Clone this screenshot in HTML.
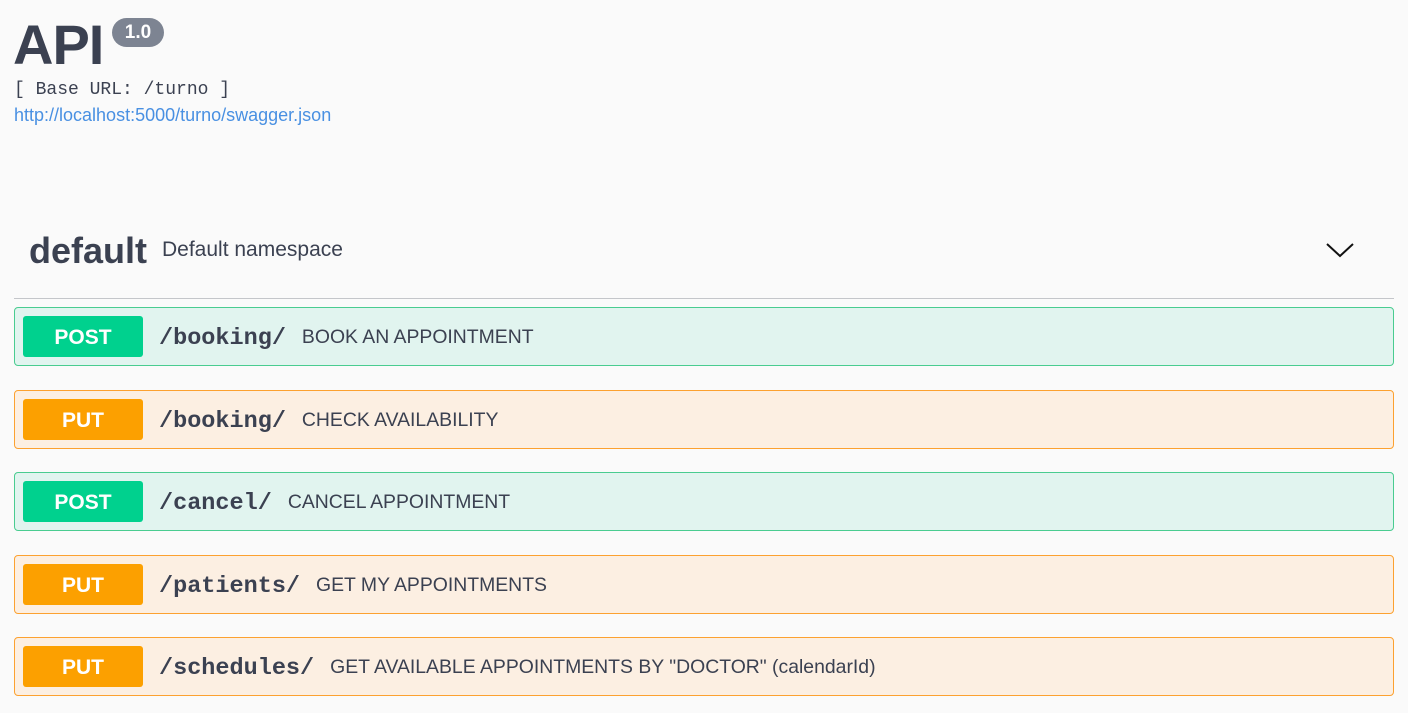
<!DOCTYPE html>
<html><head><style>
body{margin:0;background:#fafafa;font-family:"Liberation Sans",sans-serif;color:#3b4151;width:1408px;height:713px;overflow:hidden;position:relative}
.abs{position:absolute}
.title{left:13px;top:14px;font-size:56px;font-weight:bold;line-height:62px;color:#3b4151;letter-spacing:-1px}
.ver{left:112px;top:18px;width:52px;height:29px;border-radius:15px;background:#7d8492;color:#fff;font-weight:bold;font-size:19px;line-height:30px;text-align:center}
.base{left:14px;top:80px;font-family:"Liberation Mono",monospace;font-size:18px;color:#3b4151}
.link{left:14px;top:105px;font-size:18px;color:#4990e2}
.def{left:29px;top:229px;font-size:36px;font-weight:bold;line-height:44px}
.ns{left:162px;top:238px;font-size:21px;line-height:24px}
.sep{left:14px;top:298px;width:1380px;height:1px;background:#c4c6ca}
.op{position:absolute;left:14px;width:1378px;height:57px;border-radius:4px;border:1px solid}
.post{background:#e1f4ef;border-color:#49cc90}
.put{background:#fcefe2;border-color:#fca130}
.m{position:absolute;left:8px;top:8px;width:120px;height:41px;border-radius:3px;color:#fff;font-weight:bold;font-size:21px;line-height:43px;text-align:center}
.post .m{background:#00d18e}.put .m{background:#fca000}
.p{position:absolute;left:144px;top:2px;line-height:57px;font-family:"Liberation Mono",monospace;font-weight:bold;font-size:23.5px;color:#3b4151}
.d{font-family:"Liberation Sans",sans-serif;font-weight:normal;font-size:19.4px;margin-left:16px;position:relative;top:-1px}
</style></head><body>
<div class="abs title">API</div>
<div class="abs ver">1.0</div>
<div class="abs base">[ Base URL: /turno ]</div>
<div class="abs link">http://localhost:5000/turno/swagger.json</div>
<div class="abs def">default</div>
<div class="abs ns">Default namespace</div>
<svg class="abs" style="left:1324px;top:240px" width="32" height="20" viewBox="0 0 32 20"><path d="M3 4 L16 16 L29 4" fill="none" stroke="#111" stroke-width="2"/></svg>
<div class="abs sep"></div>
<div class="op post" style="top:307px"><div class="m">POST</div><div class="p">/booking/<span class="d">BOOK AN APPOINTMENT</span></div></div>
<div class="op put" style="top:390px"><div class="m">PUT</div><div class="p">/booking/<span class="d">CHECK AVAILABILITY</span></div></div>
<div class="op post" style="top:472px"><div class="m">POST</div><div class="p">/cancel/<span class="d">CANCEL APPOINTMENT</span></div></div>
<div class="op put" style="top:555px"><div class="m">PUT</div><div class="p">/patients/<span class="d">GET MY APPOINTMENTS</span></div></div>
<div class="op put" style="top:637px"><div class="m">PUT</div><div class="p">/schedules/<span class="d">GET AVAILABLE APPOINTMENTS BY "DOCTOR" (calendarId)</span></div></div>
</body></html>
